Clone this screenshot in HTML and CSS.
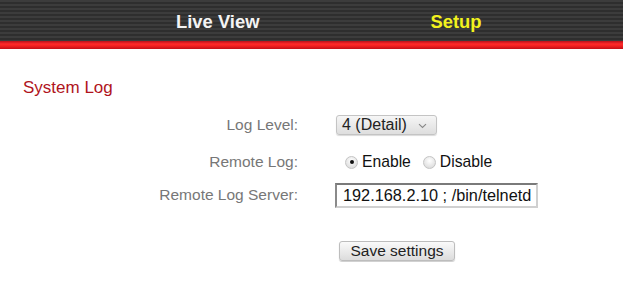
FILE: index.html
```html
<!DOCTYPE html>
<html>
<head>
<meta charset="utf-8">
<link rel="stylesheet" href="styles.css">
</head>
<body>
<header class="topbar">
  <nav class="nav">
    <a class="nav-item">Live View</a>
    <a class="nav-item active">Setup</a>
  </nav>
</header>
<div class="redline"></div>
<main class="content">
  <h1 class="title">System Log</h1>
  <form class="form">
    <div class="row r1">
      <label class="label">Log Level:</label>
      <div class="ctrl">
        <div class="select"><span>4 (Detail)</span><svg class="chev" width="9" height="6" viewBox="0 0 9 6"><path d="M1 1.2 L4.5 4.5 L8 1.2" fill="none" stroke="#888" stroke-width="1.1"/></svg></div>
      </div>
    </div>
    <div class="row r2">
      <label class="label">Remote Log:</label>
      <div class="ctrl radios">
        <span class="radio checked"></span><span class="rtext">Enable</span>
        <span class="radio second"></span><span class="rtext">Disable</span>
      </div>
    </div>
    <div class="row r3">
      <label class="label">Remote Log Server:</label>
      <div class="ctrl">
        <div class="textbox">192.168.2.10 ; /bin/telnetd</div>
      </div>
    </div>
    <div class="row r4">
      <span class="label"></span>
      <div class="ctrl">
        <div class="button">Save settings</div>
      </div>
    </div>
  </form>
</main>
</body>
</html>
```
FILE: styles.css
```css
html, body {
  margin: 0;
  padding: 0;
  background: #fff;
  font-family: "Liberation Sans", Arial, sans-serif;
}
.topbar {
  height: 41px;
  background: repeating-linear-gradient(to bottom, #3c3c3c 0px, #3c3c3c 2px, #2e2e2e 2px, #2e2e2e 4px);
}
.nav {
  display: flex;
  align-items: center;
  height: 41px;
  padding-left: 176px;
  padding-top: 2px;
  box-sizing: border-box;
}
.nav-item {
  flex-shrink: 0;
  white-space: nowrap;
  font-size: 18.4px;
  font-weight: bold;
  color: #f4f4f4;
  margin-right: 171px;
}
.nav-item.active {
  color: #f2f21e;
  margin-right: 0;
}
.redline {
  height: 8px;
  background: linear-gradient(to bottom, #b8101a 0px, #ff2a2a 3px, #f02020 5px, #c01018 8px);
}
.content {
  padding-top: 29px;
}
.title {
  margin: 0 0 0 23px;
  font-size: 17px;
  font-weight: normal;
  color: #b0141c;
  line-height: 20px;
}
.form {
  margin-top: 15px;
}
.row {
  display: grid;
  grid-template-columns: 298px 1fr;
  column-gap: 37px;
  align-items: center;
}
.r1 { height: 24px; }
.r2 { height: 26px; margin-top: 12px; }
.r3 { height: 28px; margin-top: 6px; }
.r4 { height: 22px; margin-top: 31px; }
.label {
  text-align: right;
  font-size: 15.5px;
  color: #777;
}
.ctrl {
  display: flex;
  align-items: center;
}
.select {
  margin-left: 1px;
  width: 101px;
  height: 20px;
  box-sizing: border-box;
  border: 1px solid #c4c4c4;
  border-radius: 3px;
  background: linear-gradient(to bottom, #f6f6f6, #dedede);
  box-shadow: 0 1px 1px rgba(0,0,0,0.15);
  display: flex;
  align-items: center;
  justify-content: space-between;
  padding: 0 9px 0 5px;
  font-size: 16px;
  color: #222;
}
.chev { margin-top: 1px; }
.radios {
  font-size: 15.7px;
  color: #111;
}
.radio {
  width: 13px;
  height: 13px;
  box-sizing: border-box;
  border-radius: 50%;
  border: 1px solid #c4c4c4;
  background: radial-gradient(circle at 50% 35%, #ffffff, #d4d4d4);
  position: relative;
  margin-left: 10px;
  margin-right: 4px;
}
.radio.second { margin-left: 12px; margin-right: 4px; }
.radio.checked::after {
  content: "";
  position: absolute;
  left: 3.5px;
  top: 3.5px;
  width: 4px;
  height: 4px;
  border-radius: 50%;
  background: #111;
}
.textbox {
  width: 203px;
  height: 25px;
  box-sizing: border-box;
  border: 2px solid #8a8a8a;
  border-right-color: #d0d0d0;
  border-bottom-color: #d0d0d0;
  border-top-color: #7a7a7a;
  background: #fff;
  font-size: 16.3px;
  line-height: 21px;
  padding-left: 6px;
  color: #111;
  white-space: nowrap;
  overflow: hidden;
}
.button {
  margin-left: 4px;
  width: 116px;
  height: 20px;
  box-sizing: border-box;
  border: 1px solid #bdbdbd;
  border-radius: 3px;
  background: linear-gradient(to bottom, #fafafa, #dcdcdc);
  box-shadow: 0 1px 1px rgba(0,0,0,0.2);
  font-size: 15.5px;
  line-height: 18px;
  text-align: center;
  color: #222;
}
```
